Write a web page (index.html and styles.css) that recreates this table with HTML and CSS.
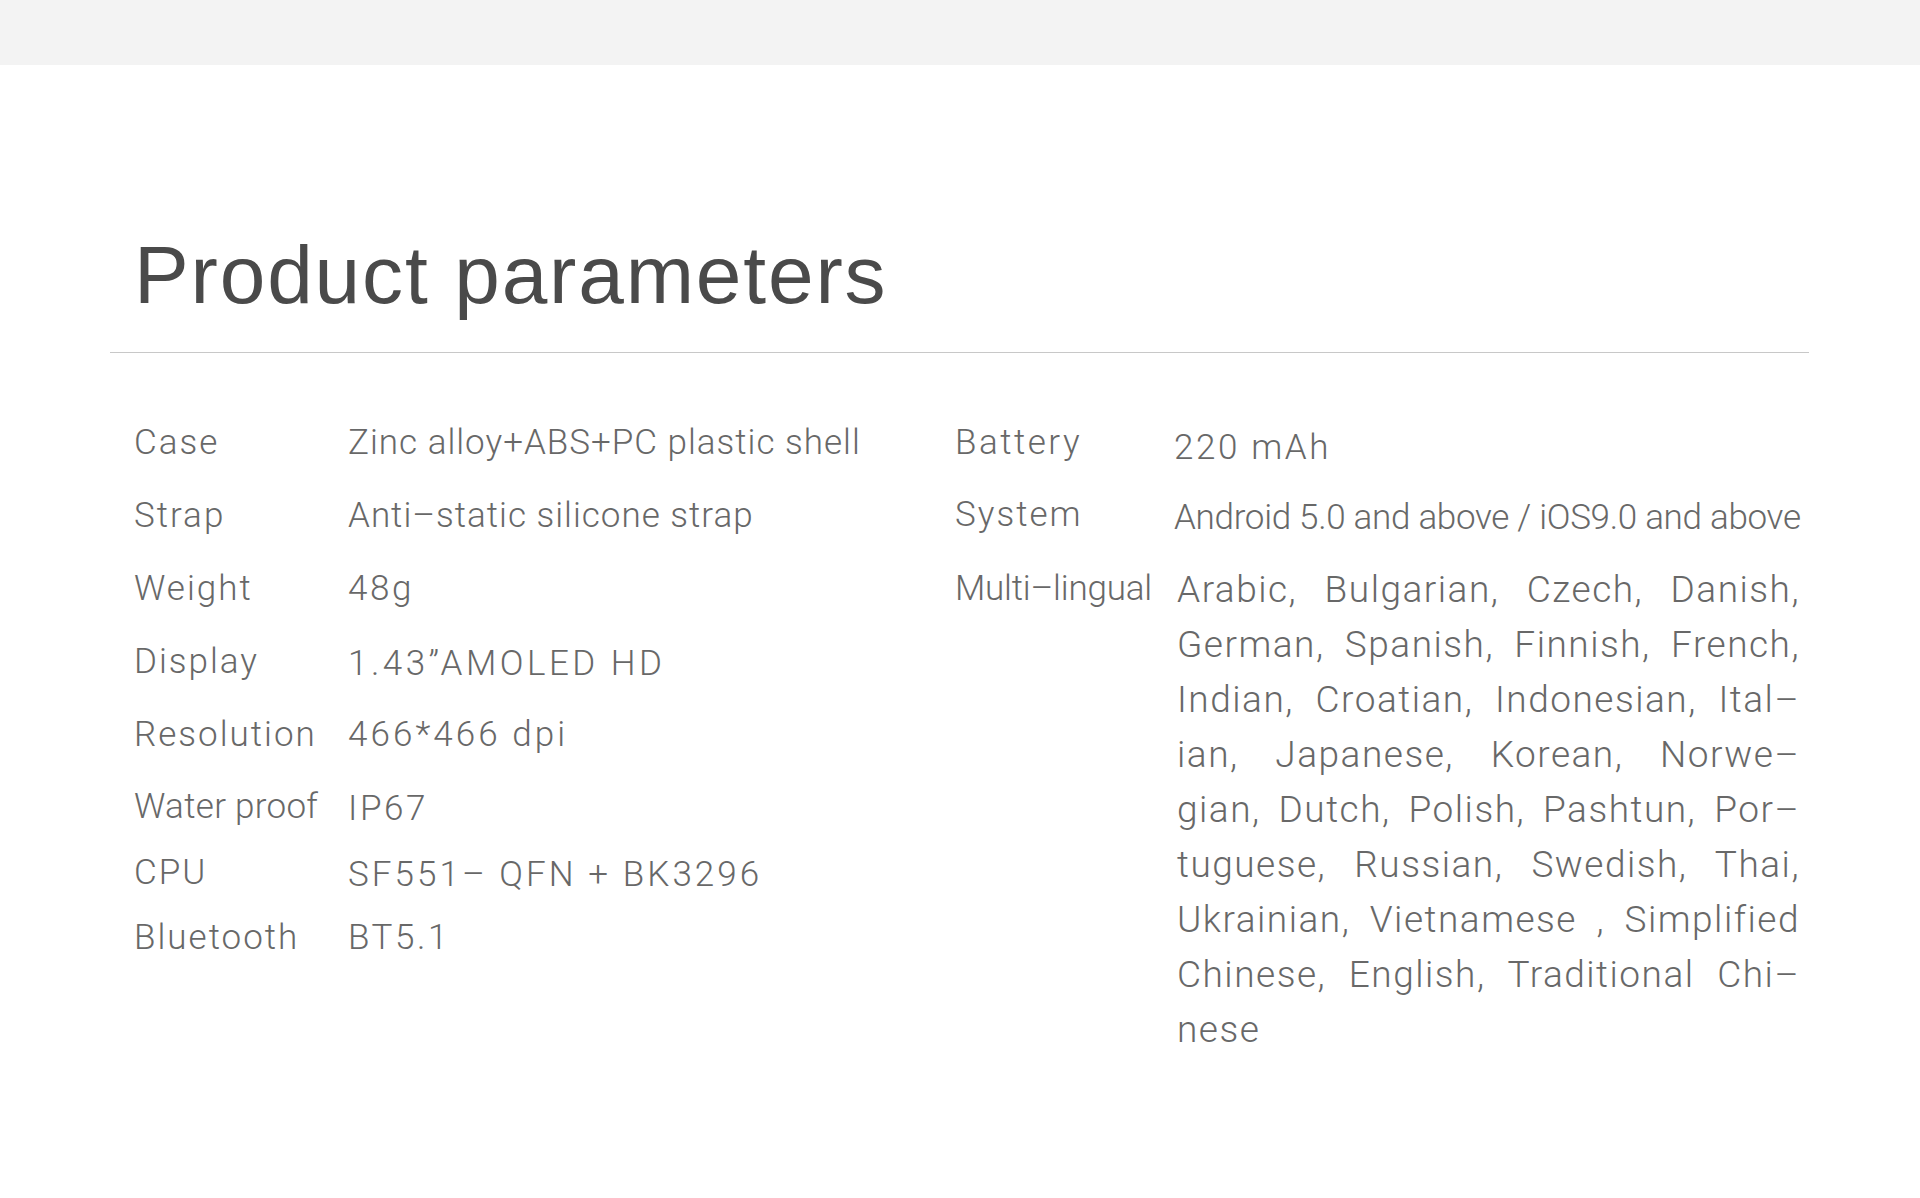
FILE: index.html
```html
<!DOCTYPE html>
<html lang="en">
<head>
<meta charset="utf-8">
<title>Product parameters</title>
<link rel="stylesheet" href="styles.css">
</head>
<body>
<div class="topbar"></div>
<main class="page">
  <h1 class="title">Product parameters</h1>
  <hr class="rule">
  <section class="specs">
    <div class="col col-left">
      <div class="row h73"><span class="label">Case</span><span class="value">Zinc alloy+ABS+PC plastic shell</span></div>
      <div class="row h73"><span class="label">Strap</span><span class="value">Anti–static silicone strap</span></div>
      <div class="row h73"><span class="label">Weight</span><span class="value value-num">48g</span></div>
      <div class="row h73"><span class="label">Display</span><span class="value value-display value-down">1.43”AMOLED HD</span></div>
      <div class="row h72"><span class="label">Resolution</span><span class="value value-wide">466*466 dpi</span></div>
      <div class="row h66"><span class="label label-tight">Water proof</span><span class="value value-num value-down">IP67</span></div>
      <div class="row h65"><span class="label">CPU</span><span class="value value-wide value-down">SF551– QFN + BK3296</span></div>
      <div class="row h65"><span class="label">Bluetooth</span><span class="value value-num">BT5.1</span></div>
    </div>
    <div class="col col-right">
      <div class="row h72"><span class="label label-wide">Battery</span><span class="value value-num value-low">220 mAh</span></div>
      <div class="row h74"><span class="label">System</span><span class="value value-tight">Android 5.0 and above / iOS9.0 and above</span></div>
      <div class="row"><span class="label label-narrow">Multi–lingual</span>
        <p class="langs">
          <span class="line">Arabic, Bulgarian, Czech, Danish,</span>
          <span class="line">German, Spanish, Finnish, French,</span>
          <span class="line">Indian, Croatian, Indonesian, Ital–</span>
          <span class="line">ian, Japanese, Korean, Norwe–</span>
          <span class="line">gian, Dutch, Polish, Pashtun, Por–</span>
          <span class="line">tuguese, Russian, Swedish, Thai,</span>
          <span class="line">Ukrainian, Vietnamese , Simplified</span>
          <span class="line">Chinese, English, Traditional Chi–</span>
          <span class="line line-last">nese</span>
        </p>
      </div>
    </div>
  </section>
</main>
</body>
</html>
```

FILE: styles.css
```css
html, body {
  margin: 0;
  padding: 0;
  background: #ffffff;
}

body {
  font-family: "Roboto", "Liberation Sans", sans-serif;
  color: #686868;
}

.topbar {
  height: 65px;
  background: #f3f3f3;
}

.page {
  padding: 164px 111px 120px 110px;
}

.title {
  margin: 0;
  padding-left: 24px;
  font-family: "Liberation Sans", Arial, sans-serif;
  font-weight: 400;
  font-size: 82px;
  line-height: 92px;
  letter-spacing: 1.85px;
  color: #4a4a4a;
}

.rule {
  margin: 31px 0 0 0;
  border: 0;
  height: 1px;
  background: #c8c8c8;
}

.specs {
  display: flex;
  padding: 70px 0 0 24px;
}

.col-left {
  width: 821px;
  flex: none;
}

.col-right {
  flex: 1;
}

.row {
  display: flex;
  align-items: flex-start;
  font-size: 35px;
  font-weight: 300;
  line-height: 40px;
}

.h65 { height: 65px; }
.h66 { height: 66px; }
.h72 { height: 72px; }
.h73 { height: 73px; }
.h74 { height: 74px; }

.label {
  letter-spacing: 2px;
}

.value {
  letter-spacing: 1px;
}

.col-left .label {
  width: 214px;
  flex: none;
}

.col-right .label {
  width: 219px;
  flex: none;
}

.label-tight {
  letter-spacing: 0.3px;
}

.label-wide {
  letter-spacing: 2.5px;
}

.label-narrow {
  letter-spacing: -0.2px;
}

.value-num {
  letter-spacing: 2.6px;
}

.value-wide {
  letter-spacing: 3.05px;
}

.value-display {
  letter-spacing: 3.5px;
}

.value-down {
  padding-top: 2px;
}

.value-low {
  padding-top: 5px;
}

.value-tight {
  padding-top: 3px;
  letter-spacing: -0.3px;
}

.langs {
  margin: 0;
  width: 623px;
  padding-left: 3px;
  font-size: 37px;
  line-height: 55px;
  letter-spacing: 1.5px;
  margin-top: -7px;
}

.line {
  display: block;
  text-align: justify;
  text-align-last: justify;
}

.line-last {
  text-align-last: left;
}
```
